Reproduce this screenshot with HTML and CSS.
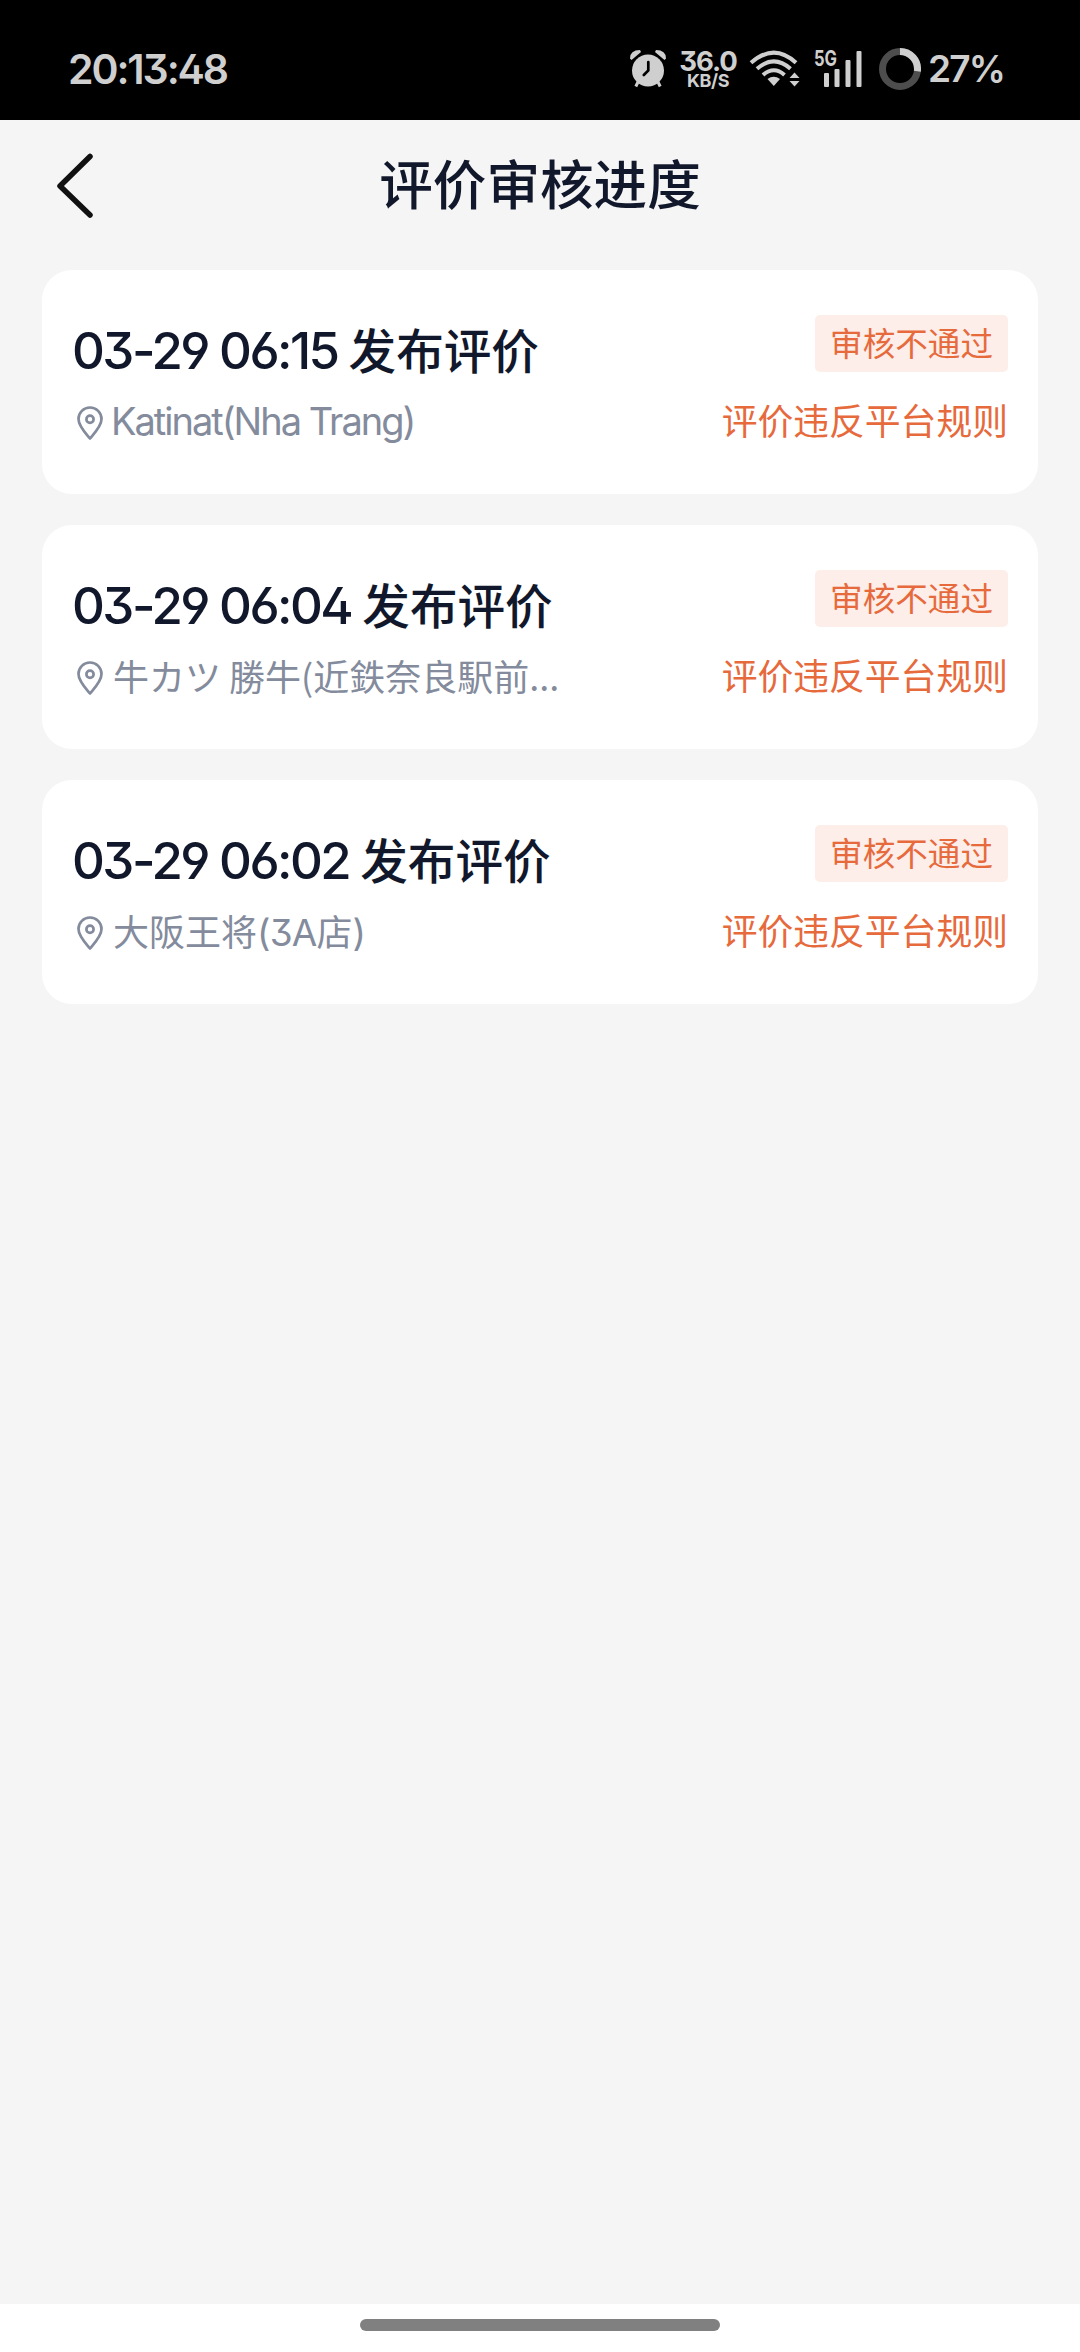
FILE: index.html
```html
<!DOCTYPE html>
<html lang="zh-CN">
<head>
<meta charset="utf-8">
<meta name="viewport" content="width=device-width">
<title>评价审核进度</title>
<link rel="stylesheet" href="styles.css">
</head>
<body>
<svg width="0" height="0" class="defs">
  <symbol id="pin" viewBox="0 0 26 35">
    <path d="M13 32.5 C9 27.6 1.5 20.2 1.5 13 A11.5 11.5 0 0 1 24.5 13 C24.5 20.2 17 27.6 13 32.5Z" fill="none" stroke="currentColor" stroke-width="2.7" stroke-linejoin="round"/>
    <circle cx="13" cy="13.3" r="3.6" fill="none" stroke="currentColor" stroke-width="2.7"/>
  </symbol>
</svg>
<header class="status">
  <div class="clock">20:13:48</div>
  <div class="indicators">
    <svg class="alarm" width="38" height="40" viewBox="0 0 38 40" fill="#cfcfcf">
      <circle cx="19" cy="21.5" r="16"/>
      <path d="M1 9.5 Q1 1 11 1 L12 3 L2.500 11Z M37 9.500 Q37 1 27 1 L26 3 L35.500 11Z"/>
      <path d="M9 33 L6.800 37.500 M29 33 L31.200 37.500" stroke="#cfcfcf" stroke-width="3"/>
      <path d="M19.300 13 V21.500 L14.800 26" fill="none" stroke="#000" stroke-width="2.700" stroke-linecap="round"/>
    </svg>
    <div class="speed"><span class="rate">36.0</span><span class="unit">KB/S</span></div>
    <svg class="wifi" width="52" height="38" viewBox="0 0 52 38" fill="none" stroke="#cfcfcf" stroke-width="4">
      <path d="M2 12.800 Q25 -7.500 47 12.800"/>
      <path d="M8 18.800 Q25 4 41.500 18.800"/>
      <path d="M14 25 Q25 15.500 35.500 25"/>
      <path d="M18.500 29 Q24.500 24.500 31 29 L24.800 36Z" fill="#cfcfcf" stroke="none"/>
      <path d="M40.500 28 L45.500 22.500 L50.500 28Z M40.500 31 L45.500 36.500 L50.500 31Z" fill="#cfcfcf" stroke="none"/>
    </svg>
    <svg class="signal" width="49" height="38" viewBox="0 0 49 38" fill="#cfcfcf">
      <text x="0" y="15.500" textLength="23" lengthAdjust="spacingAndGlyphs" class="net">5G</text>
      <rect x="10" y="19.500" width="5" height="17.500" rx="1"/>
      <rect x="20.500" y="19" width="5" height="18" rx="1" class="second"/>
      <rect x="31.500" y="10" width="5" height="27" rx="1"/>
      <rect x="42.500" y="1" width="5" height="36" rx="1"/>
    </svg>
    <svg class="ring" width="42" height="42" viewBox="0 0 42 42" fill="none" stroke-width="7">
      <circle cx="21" cy="21" r="17.500" stroke="#4d4d4d"/>
      <path d="M21 3.500 A17.500 17.500 0 0 1 38.360 23.200" stroke="#cfcfcf"/>
    </svg>
    <div class="percent">27%</div>
  </div>
</header>
<nav class="nav">
  <svg class="back" width="37" height="66" viewBox="0 0 37 66"><path d="M34 3.500 L4 33 L34 62" fill="none" stroke="#111" stroke-width="5.500" stroke-linecap="round" stroke-linejoin="round"/></svg>
  <h1>评价审核进度</h1>
</nav>
<main class="list">
  <article class="card">
    <div class="info">
      <h2><span class="date">03-29 06:15</span><span class="action">发布评价</span></h2>
      <p class="place"><svg class="pin"><use href="#pin"/></svg><span class="latin">Katinat(Nha Trang)</span></p>
    </div>
    <div class="result"><span class="tag">审核不通过</span><span class="reason">评价违反平台规则</span></div>
  </article>
  <article class="card">
    <div class="info">
      <h2><span class="date">03-29 06:04</span><span class="action">发布评价</span></h2>
      <p class="place"><svg class="pin"><use href="#pin"/></svg><span class="name">牛カツ 勝牛(近鉄奈良駅前...</span></p>
    </div>
    <div class="result"><span class="tag">审核不通过</span><span class="reason">评价违反平台规则</span></div>
  </article>
  <article class="card">
    <div class="info">
      <h2><span class="date">03-29 06:02</span><span class="action">发布评价</span></h2>
      <p class="place"><svg class="pin"><use href="#pin"/></svg><span class="name">大阪王将<span class="mixed">(3A</span>店<span class="mixed">)</span></span></p>
    </div>
    <div class="result"><span class="tag">审核不通过</span><span class="reason">评价违反平台规则</span></div>
  </article>
</main>
<footer class="gesture"><div class="handle"></div></footer>
</body>
</html>
```
FILE: styles.css
```css
* { box-sizing: border-box; }
body {
  margin: 0;
  height: 2352px;
  display: flex;
  flex-direction: column;
  background: #f5f5f5;
  font-family: "Noto Sans CJK SC", sans-serif;
  color: #12182b;
}
h1, h2, p { margin: 0; font-weight: 500; }
svg { display: block; flex: none; }
.defs { position: absolute; }

.status {
  height: 120px;
  flex: none;
  background: #000;
  color: #cfcfcf;
  display: flex;
  justify-content: space-between;
  align-items: center;
  padding: 18px 76px 0 68px;
  font-family: Inter, sans-serif;
  font-feature-settings: "cv09", "cv02";
}
.clock { font-size: 41px; font-weight: 600; letter-spacing: -2.1px; line-height: 50px; }
.indicators { display: flex; align-items: center; }
.speed {
  width: 60px;
  margin-left: 11px;
  display: flex;
  flex-direction: column;
  align-items: center;
}
.rate { font-size: 27.5px; font-weight: 700; line-height: 22px; letter-spacing: -1px; }
.unit { font-size: 18px; font-weight: 700; line-height: 17px; letter-spacing: -0.4px; }
.wifi { margin-left: 11px; }
.signal { margin-left: 13px; overflow: visible; }
.signal rect:first-of-type { y: 23px; height: 14px; }
.net { font-size: 21.5px; font-weight: 700; }
.ring { margin-left: 16px; }
.percent { margin-left: 7px; width: 76px; font-size: 37px; font-weight: 600; letter-spacing: -1.8px; line-height: 42px; white-space: nowrap; }

.nav {
  height: 150px;
  flex: none;
  display: grid;
  grid-template-columns: 1fr auto 1fr;
  padding: 30px 56px 0;
}
.back { margin-top: 3px; }
.nav h1 { font-size: 53.6px; line-height: 64px; }

.list { flex: 1; display: flex; flex-direction: column; gap: 31px; padding: 0 42px; }
.card {
  height: 224px;
  background: #fff;
  border-radius: 30px;
  display: flex;
  justify-content: space-between;
  padding: 45px 30px 0;
}
.info h2 { font-size: 47.6px; line-height: 72px; white-space: nowrap; display: flex; gap: 11px; }
.action { line-height: 67px; }
.date { font-family: Inter, sans-serif; font-size: 51px; letter-spacing: -2.55px; font-feature-settings: "cv09", "cv02", "cv03", "cv04"; }
.place {
  display: flex;
  align-items: center;
  gap: 10px;
  padding-left: 5px;
  height: 68px;
  font-size: 36px;
  font-weight: 400;
  color: #838b9c;
  white-space: nowrap;
}
.pin { width: 26px; height: 35px; margin-top: 4px; }
.name { margin-top: -3px; }
.latin { font-family: Inter, sans-serif; font-size: 38px; letter-spacing: -2px; margin-left: -2px; }
.mixed { font-family: Inter, sans-serif; font-size: 37px; letter-spacing: -0.8px; font-feature-settings: "cv09"; }
.result { display: flex; flex-direction: column; align-items: flex-end; color: #e66a3c; }
.tag {
  height: 57px;
  padding: 0 15px;
  border-radius: 5px;
  background: #fdeeea;
  font-size: 32.6px;
  line-height: 53px;
}
.reason { font-size: 35.8px; line-height: 50px; margin-top: 22px; }

.gesture { height: 48px; flex: none; background: #fff; display: flex; justify-content: center; padding-top: 15px; }
.handle { width: 360px; height: 12px; border-radius: 6px; background: #808080; }
```
